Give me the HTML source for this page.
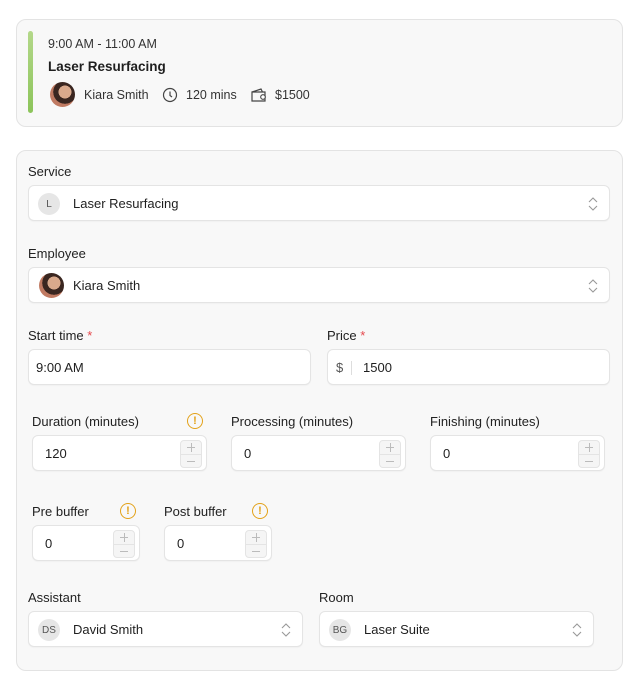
<!DOCTYPE html>
<html><head><meta charset="utf-8"><style>
*{box-sizing:border-box;margin:0;padding:0}
body{width:638px;height:683px;background:#fff;font-family:"Liberation Sans",sans-serif;color:#1f1f1f;position:relative;overflow:hidden;font-size:13px}
.a{position:absolute}
.card{position:absolute;background:#f8f8f8;border:1px solid #e3e3e3;border-radius:10px}
.lbl{position:absolute;font-size:13px;color:#222;line-height:16px}
.req{color:#e5484d}
.box{position:absolute;background:#fff;border:1px solid #e4e4e4;border-radius:6px;height:36px;box-shadow:0 1px 1px rgba(0,0,0,.03)}
.box .t{position:absolute;top:10px;font-size:13px;line-height:16px}
.av{position:absolute;left:9px;top:7px;width:22px;height:22px;border-radius:50%;background:#e6e6e6;font-size:10px;color:#555;display:flex;align-items:center;justify-content:center}
.ph{position:absolute;border-radius:50%;background:radial-gradient(circle at 60% 40%,#d9a98c 0 30%,#3a2620 31% 55%,#c07a62 56%)}
.chev{position:absolute;right:10px;top:10px;width:12px;height:16px}
.step{position:absolute;right:4px;top:4px;width:22px;height:28px;border:1px solid #e4e4e4;border-radius:4px;background:#f5f5f5}
.step:before{content:"";position:absolute;left:6px;right:6px;top:6px;border-top:1px solid #bbb}
.step b{position:absolute;left:10px;top:2px;height:9px;border-left:1px solid #bbb}
.step:after{content:"";position:absolute;left:6px;right:6px;top:20px;border-top:1px solid #bbb}
.step i{position:absolute;left:0;right:0;top:13px;border-top:1px solid #e4e4e4}
.warn{position:absolute;width:16px;height:16px;border:1.5px solid #e3a21a;border-radius:50%;color:#e3a21a;font-size:11px;font-weight:bold;display:flex;align-items:center;justify-content:center}
</style></head><body>
<div class="card" style="left:16px;top:19px;width:607px;height:108px"></div>
<div class="a" style="left:28px;top:31px;width:5px;height:82px;border-radius:3px;background:linear-gradient(#b4d88a,#8cc45a)"></div>
<div class="a" style="left:48px;top:37px;font-size:12.5px;color:#333">9:00 AM - 11:00 AM</div>
<div class="a" style="left:48px;top:59px;font-size:13.5px;font-weight:bold">Laser Resurfacing</div>
<div class="ph" style="left:50px;top:82px;width:25px;height:25px"></div>
<div class="a" style="left:84px;top:88px;font-size:12.5px;color:#333">Kiara Smith</div>
<svg class="a" style="left:162px;top:87px" width="16" height="16" viewBox="0 0 16 16"><circle cx="8" cy="8" r="6.5" fill="none" stroke="#444" stroke-width="1.2"/><path d="M8 4.5V8.5L10 10" fill="none" stroke="#444" stroke-width="1.2"/></svg>
<div class="a" style="left:186px;top:88px;font-size:12.5px;color:#333">120 mins</div>
<svg class="a" style="left:250px;top:86px" width="18" height="18" viewBox="0 0 18 18"><path d="M2 6h13v9H2z M2 6l9-3 1.5 3" fill="none" stroke="#444" stroke-width="1.2"/><circle cx="13" cy="11" r="2.3" fill="#fff" stroke="#444" stroke-width="1.1"/></svg>
<div class="a" style="left:275px;top:88px;font-size:12.5px;color:#333">$1500</div>

<div class="card" style="left:16px;top:150px;width:607px;height:521px"></div>
<div class="lbl" style="left:28px;top:164px">Service</div>
<div class="box" style="left:28px;top:185px;width:582px"><div class="av">L</div><div class="t" style="left:44px">Laser Resurfacing</div><svg class="chev" viewBox="0 0 12 16"><path d="M2 6l4-4 4 4M2 10l4 4 4-4" fill="none" stroke="#999" stroke-width="1.1"/></svg></div>
<div class="lbl" style="left:28px;top:246px">Employee</div>
<div class="box" style="left:28px;top:267px;width:582px"><div class="ph" style="left:10px;top:5px;width:25px;height:25px"></div><div class="t" style="left:44px">Kiara Smith</div><svg class="chev" viewBox="0 0 12 16"><path d="M2 6l4-4 4 4M2 10l4 4 4-4" fill="none" stroke="#999" stroke-width="1.1"/></svg></div>
<div class="lbl" style="left:28px;top:328px">Start time <span class="req">*</span></div>
<div class="box" style="left:28px;top:349px;width:283px"><div class="t" style="left:7px">9:00 AM</div></div>
<div class="lbl" style="left:327px;top:328px">Price <span class="req">*</span></div>
<div class="box" style="left:327px;top:349px;width:283px"><div class="t" style="left:8px;color:#555">$</div><div class="a" style="left:23px;top:11px;height:14px;border-left:1px solid #ddd"></div><div class="t" style="left:35px">1500</div></div>

<div class="lbl" style="left:32px;top:414px">Duration (minutes)</div><div class="warn" style="left:187px;top:413px">!</div>
<div class="box" style="left:32px;top:435px;width:175px"><div class="t" style="left:12px">120</div><div class="step"><b></b><i></i></div></div>
<div class="lbl" style="left:231px;top:414px">Processing (minutes)</div>
<div class="box" style="left:231px;top:435px;width:175px"><div class="t" style="left:12px">0</div><div class="step"><b></b><i></i></div></div>
<div class="lbl" style="left:430px;top:414px">Finishing (minutes)</div>
<div class="box" style="left:430px;top:435px;width:175px"><div class="t" style="left:12px">0</div><div class="step"><b></b><i></i></div></div>

<div class="lbl" style="left:32px;top:504px">Pre buffer</div><div class="warn" style="left:120px;top:503px">!</div>
<div class="box" style="left:32px;top:525px;width:108px"><div class="t" style="left:12px">0</div><div class="step"><b></b><i></i></div></div>
<div class="lbl" style="left:164px;top:504px">Post buffer</div><div class="warn" style="left:252px;top:503px">!</div>
<div class="box" style="left:164px;top:525px;width:108px"><div class="t" style="left:12px">0</div><div class="step"><b></b><i></i></div></div>

<div class="lbl" style="left:28px;top:590px">Assistant</div>
<div class="box" style="left:28px;top:611px;width:275px"><div class="av">DS</div><div class="t" style="left:44px">David Smith</div><svg class="chev" viewBox="0 0 12 16"><path d="M2 6l4-4 4 4M2 10l4 4 4-4" fill="none" stroke="#999" stroke-width="1.1"/></svg></div>
<div class="lbl" style="left:319px;top:590px">Room</div>
<div class="box" style="left:319px;top:611px;width:275px"><div class="av">BG</div><div class="t" style="left:44px">Laser Suite</div><svg class="chev" viewBox="0 0 12 16"><path d="M2 6l4-4 4 4M2 10l4 4 4-4" fill="none" stroke="#999" stroke-width="1.1"/></svg></div>
</body></html>
